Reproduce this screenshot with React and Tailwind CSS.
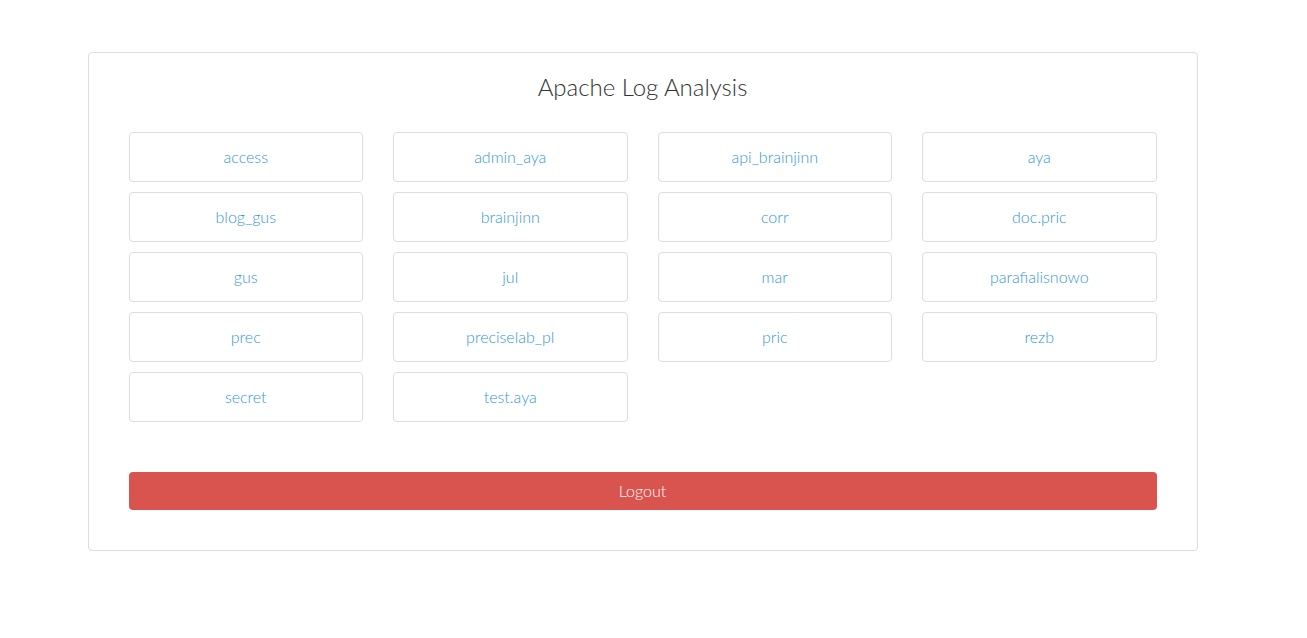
const logs = [
  "access",
  "admin_aya",
  "api_brainjinn",
  "aya",
  "blog_gus",
  "brainjinn",
  "corr",
  "doc.pric",
  "gus",
  "jul",
  "mar",
  "parafialisnowo",
  "prec",
  "preciselab_pl",
  "pric",
  "rezb",
  "secret",
  "test.aya",
];

export default function App() {
  return (
    <div
      className="min-h-screen bg-white pt-[52px]"
      style={{ fontFamily: "Lato, 'Open Sans', sans-serif" }}
    >
      <div className="w-[1285px]">
        <div className="mx-auto w-[1110px] rounded-[4px] border border-[#dddddd] px-[40px] pt-[18px] pb-[40px]">
          <h1 className="text-center text-[24px] leading-[32px] font-light text-[#333333]">
            Apache Log Analysis
          </h1>

          <div className="mt-[29px] grid grid-cols-4 gap-x-[30px] gap-y-[10px]">
            {logs.map((name) => (
              <a
                key={name}
                href="#"
                className="flex h-[50px] items-center justify-center rounded-[4px] border border-[#dddddd] text-[16px] font-light text-[#3498db]"
              >
                {name}
              </a>
            ))}
          </div>

          <button className="mt-[50px] flex h-[38px] w-full items-center justify-center rounded-[4px] bg-[#d9534f] text-[16px] font-light text-white">
            Logout
          </button>
        </div>
      </div>
    </div>
  );
}
